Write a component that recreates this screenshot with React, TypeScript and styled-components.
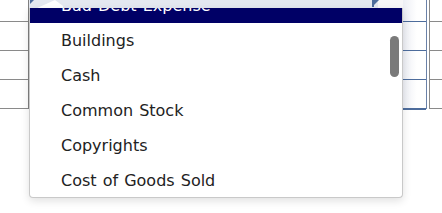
import React from "react";
import styled, { createGlobalStyle } from "styled-components";

const Global = createGlobalStyle`
  html, body { margin: 0; padding: 0; background: #ffffff; }
  body { font-family: "DejaVu Sans", Verdana, sans-serif; }
`;

const Page = styled.div`
  position: relative;
  width: 442px;
  height: 213px;
  overflow: hidden;
  background: #ffffff;
`;

const Sheet = styled.div`
  display: grid;
  grid-template-columns: 28px 1px 374px 23px 1px 2px 1px 12px;
  grid-template-rows: 22px 29px 29px 29px;
`;

const LeftCell = styled.div`
  border-bottom: 1px solid #8a8a8a;
  box-sizing: border-box;
`;

const VLine = styled.div<{ $color: string }>`
  background: ${(p) => p.$color};
`;

const MidCell = styled.div`
  background: #ffffff;
`;

const MidTop = styled.div`
  background: #e4e8f0;
  position: relative;
`;

const BlueCell = styled.div`
  box-sizing: border-box;
  border-bottom: 2px solid #4d6c9c;
  margin-bottom: -1px;
  background: linear-gradient(to right, #eceef4, #ffffff 60%);
`;

const Gap = styled.div`
  background: #ffffff;
`;

const RightCell = styled.div`
  border-bottom: 1px solid #8a8a8a;
  box-sizing: border-box;
`;

const Menu = styled.div`
  position: absolute;
  top: 8px;
  left: 29px;
  width: 374px;
  height: 190px;
  box-sizing: border-box;
  border: 1px solid #c9c9c9;
  border-top: none;
  border-radius: 0 0 4px 4px;
  background: #ffffff;
  box-shadow: 0 3px 8px rgba(0, 0, 0, 0.12);
  overflow: hidden;
`;

const List = styled.ul`
  list-style: none;
  margin: -20px 0 0 0;
  padding: 0;
`;

const Item = styled.li<{ $active?: boolean }>`
  height: 35px;
  display: flex;
  align-items: center;
  padding-left: 31px;
  font-family: "DejaVu Sans", Verdana, sans-serif;
  font-size: 16px;
  word-spacing: 1px;
  color: ${(p) => (p.$active ? "#ffffff" : "#222222")};
  background: ${(p) => (p.$active ? "#000066" : "transparent")};
  white-space: nowrap;
`;

const Thumb = styled.div`
  position: absolute;
  top: 28px;
  left: 360px;
  width: 9px;
  height: 41px;
  border-radius: 5px;
  background: #7a7a7a;
`;

const Deco = styled.svg`
  position: absolute;
  top: 0;
  left: 0;
  display: block;
`;

const items = [
  "Bad Debt Expense",
  "Buildings",
  "Cash",
  "Common Stock",
  "Copyrights",
  "Cost of Goods Sold",
];

export default function App() {
  const rows = [0, 1, 2, 3];
  return (
    <Page>
      <Global />
      <Sheet>
        {rows.map((r) => (
          <React.Fragment key={r}>
            <LeftCell />
            <VLine $color="#7f7f7f" />
            {r === 0 ? (
              <MidTop>
                <Deco width="374" height="22" viewBox="0 0 374 22">
                  <polygon points="1,0 5,0 1,4" fill="#4d6c9c" />
                  <polygon points="6,9 26,0 34,6 34,9" fill="#ffffff" />
                  <rect x="349" y="0" width="25" height="22" fill="#f6f6f8" />
                  <rect x="343" y="0" width="2" height="7" fill="#4d6c9c" />
                  <polygon points="345,0 350,0 345,5" fill="#4d6c9c" />
                </Deco>
              </MidTop>
            ) : (
              <MidCell />
            )}
            <BlueCell />
            <VLine $color="#6b82a8" />
            <Gap />
            <VLine $color="#8a8a8a" />
            <RightCell />
          </React.Fragment>
        ))}
      </Sheet>
      <Menu>
        <List>
          {items.map((t, i) => (
            <Item key={t} $active={i === 0}>
              {t}
            </Item>
          ))}
        </List>
        <Thumb />
      </Menu>
    </Page>
  );
}
